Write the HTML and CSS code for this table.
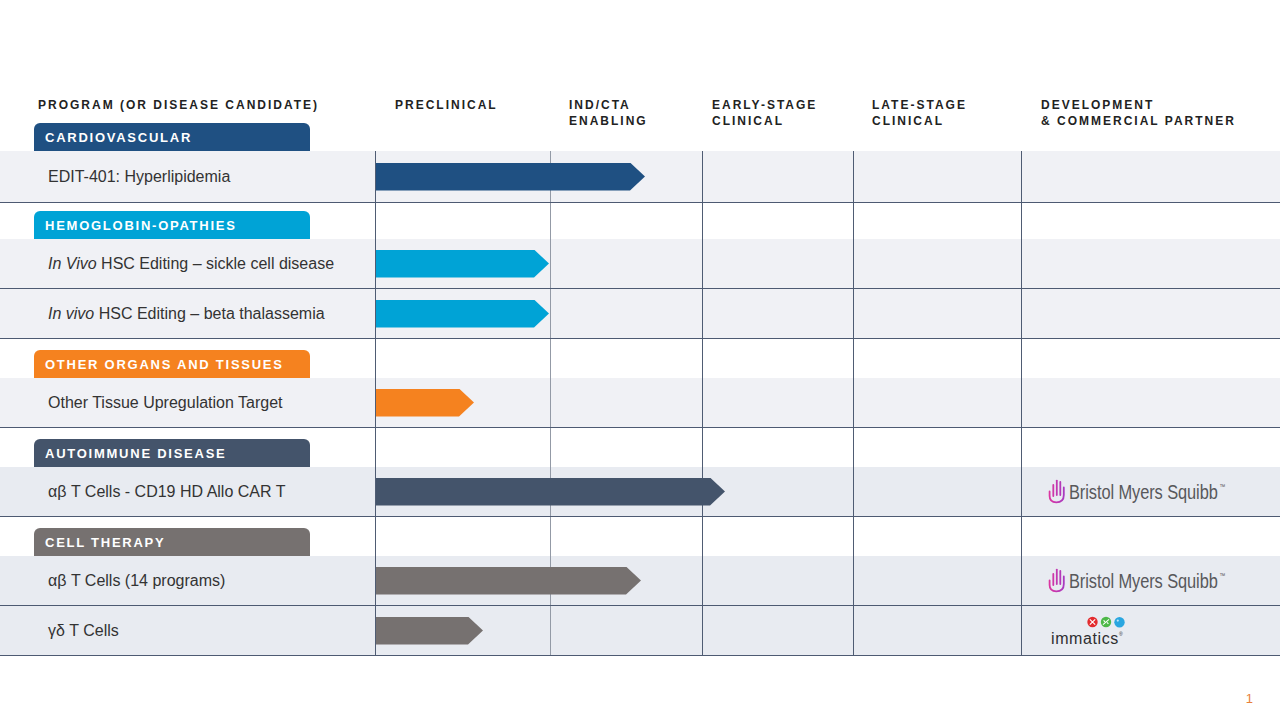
FILE: index.html
```html
<!DOCTYPE html>
<html lang="en">
<head>
<meta charset="utf-8">
<title>Pipeline</title>
<link rel="stylesheet" href="styles.css">
</head>
<body>
<div class="slide">
  <div class="pipeline">
    <div class="row head">
      <div class="first">
        <div class="colhead program">PROGRAM (OR DISEASE CANDIDATE)</div>
        <div class="tag cardio">CARDIOVASCULAR</div>
      </div>
      <div class="colhead h2">PRECLINICAL</div>
      <div class="colhead h3">IND/CTA<br>ENABLING</div>
      <div class="colhead h4">EARLY-STAGE<br>CLINICAL</div>
      <div class="colhead h5">LATE-STAGE<br>CLINICAL</div>
      <div class="colhead h6">DEVELOPMENT<br>&amp; COMMERCIAL PARTNER</div>
    </div>

    <div class="row data tall">
      <div class="label">EDIT-401: Hyperlipidemia</div>
      <div class="line c2"></div><div class="line soft c3"></div><div class="line c4"></div><div class="line c5"></div><div class="line c6"></div>
      <div class="bar cardio" style="width:269px"></div>
    </div>

    <div class="row cat compact">
      <div class="tag hemo">HEMOGLOBIN-OPATHIES</div>
      <div class="line c2"></div><div class="line soft c3"></div><div class="line c4"></div><div class="line c5"></div><div class="line c6"></div>
    </div>
    <div class="row data">
      <div class="label"><em>In Vivo</em> HSC Editing – sickle cell disease</div>
      <div class="line c2"></div><div class="line soft c3"></div><div class="line c4"></div><div class="line c5"></div><div class="line c6"></div>
      <div class="bar hemo" style="width:173px"></div>
    </div>
    <div class="row data">
      <div class="label"><em>In vivo</em> HSC Editing – beta thalassemia</div>
      <div class="line c2"></div><div class="line soft c3"></div><div class="line c4"></div><div class="line c5"></div><div class="line c6"></div>
      <div class="bar hemo" style="width:173px"></div>
    </div>

    <div class="row cat">
      <div class="tag other">OTHER ORGANS AND TISSUES</div>
      <div class="line c2"></div><div class="line soft c3"></div><div class="line c4"></div><div class="line c5"></div><div class="line c6"></div>
    </div>
    <div class="row data">
      <div class="label">Other Tissue Upregulation Target</div>
      <div class="line c2"></div><div class="line soft c3"></div><div class="line c4"></div><div class="line c5"></div><div class="line c6"></div>
      <div class="bar other" style="width:98px"></div>
    </div>

    <div class="row cat">
      <div class="tag auto">AUTOIMMUNE DISEASE</div>
      <div class="line c2"></div><div class="line soft c3"></div><div class="line c4"></div><div class="line c5"></div><div class="line c6"></div>
    </div>
    <div class="row data alt">
      <div class="label">αβ T Cells - CD19 HD Allo CAR T</div>
      <div class="line c2"></div><div class="line soft c3"></div><div class="line c4"></div><div class="line c5"></div>
      <div class="line c6 partner">
        <div class="bms">
          <svg class="bms-hand" viewBox="0 0 18 25" width="18" height="25" aria-hidden="true">
            <defs>
              <linearGradient id="bmsg1" gradientUnits="userSpaceOnUse" x1="0" y1="0" x2="18" y2="0">
                <stop offset="0" stop-color="#e0359f"/>
                <stop offset="1" stop-color="#a23bc4"/>
              </linearGradient>
            </defs>
            <g fill="none" stroke="url(#bmsg1)" stroke-width="1.8" stroke-linecap="round">
              <path d="M1.6 12.5 V17 Q1.6 23.3 8.3 23.3 Q15.8 23.3 15.8 16 V8.5"/>
              <path d="M5.3 17 V6"/>
              <path d="M8.8 16 V1.6"/>
              <path d="M12.3 16 V3"/>
            </g>
          </svg>
          <span class="bms-name">Bristol Myers Squibb<sup>™</sup></span>
        </div>
      </div>
      <div class="bar auto" style="width:349px"></div>
    </div>

    <div class="row cat">
      <div class="tag cell">CELL THERAPY</div>
      <div class="line c2"></div><div class="line soft c3"></div><div class="line c4"></div><div class="line c5"></div><div class="line c6"></div>
    </div>
    <div class="row data alt">
      <div class="label">αβ T Cells (14 programs)</div>
      <div class="line c2"></div><div class="line soft c3"></div><div class="line c4"></div><div class="line c5"></div>
      <div class="line c6 partner">
        <div class="bms">
          <svg class="bms-hand" viewBox="0 0 18 25" width="18" height="25" aria-hidden="true">
            <defs>
              <linearGradient id="bmsg2" gradientUnits="userSpaceOnUse" x1="0" y1="0" x2="18" y2="0">
                <stop offset="0" stop-color="#e0359f"/>
                <stop offset="1" stop-color="#a23bc4"/>
              </linearGradient>
            </defs>
            <g fill="none" stroke="url(#bmsg2)" stroke-width="1.8" stroke-linecap="round">
              <path d="M1.6 12.5 V17 Q1.6 23.3 8.3 23.3 Q15.8 23.3 15.8 16 V8.5"/>
              <path d="M5.3 17 V6"/>
              <path d="M8.8 16 V1.6"/>
              <path d="M12.3 16 V3"/>
            </g>
          </svg>
          <span class="bms-name">Bristol Myers Squibb<sup>™</sup></span>
        </div>
      </div>
      <div class="bar cell" style="width:265px"></div>
    </div>
    <div class="row data alt">
      <div class="label">γδ T Cells</div>
      <div class="line c2"></div><div class="line soft c3"></div><div class="line c4"></div><div class="line c5"></div>
      <div class="line c6 partner">
        <div class="immatics">
          <svg class="imm-dots" viewBox="0 0 38 12" width="38" height="12" aria-hidden="true">
            <circle cx="5.5" cy="6" r="5.2" fill="#e32b2e"/>
            <path d="M2.8 3.3 L8.2 8.7 M8.2 3.3 L2.8 8.7" stroke="#fff" stroke-width="1.1"/>
            <circle cx="19" cy="6" r="5.2" fill="#4db848"/>
            <path d="M16 8.6 L22 3.4 M16.6 4.4 L18 5.8 M20 6.4 L21.4 7.8" stroke="#fff" stroke-width="1.1"/>
            <circle cx="32.5" cy="6.2" r="5.2" fill="#2aa6e0"/>
            <circle cx="30.8" cy="4.6" r="1.1" fill="#bfe6f7"/>
          </svg>
          <span class="imm-name">immatics<sup>®</sup></span>
        </div>
      </div>
      <div class="bar cell" style="width:107px"></div>
    </div>
  </div>
  <div class="page-num">1</div>
</div>
</body>
</html>
```

FILE: styles.css
```css
html, body {
  margin: 0;
  padding: 0;
  background: #ffffff;
}

body {
  font-family: "Liberation Sans", Arial, sans-serif;
  color: #333333;
}

.slide {
  width: 1280px;
  height: 720px;
  box-sizing: border-box;
  padding-top: 97px;
  overflow: hidden;
}

.row {
  display: grid;
  grid-template-columns: 375px 175px 152px 151px 168px 1fr;
}

/* header */
.head {
  height: 54px;
}

.colhead {
  font-size: 12px;
  font-weight: 700;
  letter-spacing: 2px;
  line-height: 16px;
  color: #222222;
  white-space: nowrap;
}

.colhead.program { padding-left: 38px; }
.colhead.h2 { padding-left: 20px; }
.colhead.h3 { padding-left: 19px; }
.colhead.h4 { padding-left: 10px; }
.colhead.h5 { padding-left: 19px; }
.colhead.h6 { padding-left: 20px; }

/* category tags */
.tag {
  margin-left: 34px;
  width: 276px;
  height: 28px;
  box-sizing: border-box;
  padding-left: 11px;
  border-radius: 6px 6px 0 0;
  font-size: 13px;
  font-weight: 700;
  letter-spacing: 1.75px;
  line-height: 30px;
  color: #ffffff;
  white-space: nowrap;
}

.head .tag { margin-top: 10px; }

.tag.cardio, .bar.cardio { background: #1f5082; }
.tag.hemo, .bar.hemo { background: #00a3d6; }
.tag.other, .bar.other { background: #f5821f; }
.tag.auto, .bar.auto { background: #44546b; }
.tag.cell, .bar.cell { background: #767170; }

/* category rows */
.cat {
  height: 39px;
}

.cat.compact {
  height: 36px;
}

.cat .tag {
  grid-column: 1;
  grid-row: 1;
  align-self: end;
}

/* data rows */
.data {
  height: 49px;
  border-bottom: 1px solid #4d5a72;
  background: #f0f1f5;
}

.data.tall { height: 51px; }
.data.alt { background: #e8ebf1; }

.line {
  grid-row: 1;
  border-left: 1px solid #4f5c73;
}

.line.soft { border-left-color: #939aa6; }

.c2 { grid-column: 2; }
.c3 { grid-column: 3; }
.c4 { grid-column: 4; }
.c5 { grid-column: 5; }
.c6 { grid-column: 6; }

.label {
  grid-column: 1;
  grid-row: 1;
  align-self: center;
  padding-left: 48px;
  font-size: 16px;
  color: #333333;
  white-space: nowrap;
}

.label em { font-style: italic; }

.bar {
  grid-column: 2 / -1;
  grid-row: 1;
  align-self: center;
  justify-self: start;
  margin-left: 1px;
  height: 28px;
  clip-path: polygon(0 0, calc(100% - 15px) 0, 100% 50%, calc(100% - 15px) 100%, 0 100%);
  z-index: 1;
}

/* partner logos */
.partner {
  display: flex;
  align-items: center;
  padding-left: 26px;
}

.bms {
  display: flex;
  align-items: center;
  gap: 3px;
}

.bms-hand {
  display: block;
  flex: none;
}

.bms-name {
  display: inline-block;
  font-size: 20px;
  color: #58585b;
  letter-spacing: -0.1px;
  white-space: nowrap;
  transform: scaleX(0.82);
  transform-origin: left center;
  line-height: 24px;
  margin-bottom: 4px;
}

.bms-name sup {
  font-size: 7px;
  vertical-align: 10px;
  margin-left: 2px;
}

.immatics {
  display: flex;
  flex-direction: column;
  align-items: flex-end;
  margin-left: 3px;
}

.imm-dots {
  display: block;
  margin-right: -2px;
  margin-bottom: -1px;
}

.imm-name {
  font-size: 16px;
  line-height: 15px;
  letter-spacing: 0.6px;
  color: #2e2e30;
}

.imm-name sup {
  font-size: 5px;
  vertical-align: 8px;
  letter-spacing: 0;
}

/* footer */
.page-num {
  margin-top: 35px;
  padding-right: 27px;
  text-align: right;
  font-size: 13px;
  line-height: 16px;
  color: #e8803a;
}
```
